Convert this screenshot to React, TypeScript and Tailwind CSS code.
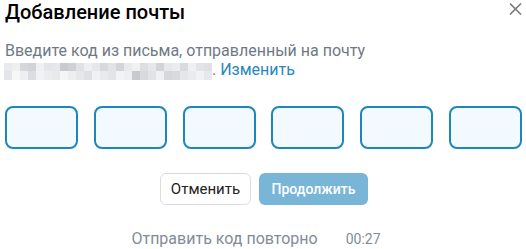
import React from "react";

const shadesTop = [
  "#e9eaec","#eeeff1","#d6d7db","#d2d3d7","#f0f0f2","#e4e5e8","#e6e7ea","#c9cacf","#cfd0d4","#e0e1e4",
  "#eeeff0","#e6e7ea","#d8d9dd","#e2e3e6","#d4d5d9","#e9eaec","#f1f1f3","#dddee1","#e6e7e9","#d3d4d8",
  "#e7e8ea","#ececee","#d9dadd","#f0f0f2","#e3e4e7","#dfe0e3",
];
const shadesBot = [
  "#e4e5e8","#f7f7f8","#eeeff1","#dcdde0","#f2f2f4","#ebecee","#e8e9eb","#f5f5f6","#edeef0","#e6e7e9",
  "#dfe0e3","#f1f1f3","#e9eaec","#e4e5e8","#f3f3f5","#eeeff0","#c8c9ce","#d8d9dc","#e2e3e5","#f0f0f2",
  "#d6d7da","#d9dadd","#e5e6e8","#eaebed","#f1f2f3","#e7e8ea",
];

export default function App() {
  return (
    <div
      className="w-[526px] h-[249px] bg-white relative overflow-hidden"
      style={{ fontFamily: "Roboto, 'Liberation Sans', sans-serif" }}
    >
      <button className="absolute left-[507px] top-[1px] w-[16px] h-[16px] flex items-center justify-center">
        <svg width="13" height="12" viewBox="0 0 13 12" fill="none">
          <path d="M1 0.5 L12 11.5 M12 0.5 L1 11.5" stroke="#7d7d7d" strokeWidth="1.6" />
        </svg>
      </button>

      <div className="pl-[5px] pr-[4px]">
        <h1 className="text-[20px] leading-[24px] font-medium text-black">
          Добавление почты
        </h1>

        <div className="mt-[17px] text-[16px] leading-[19px] text-[#6f7985]">
          <div>Введите код из письма, отправленный на почту</div>
          <div className="whitespace-nowrap">
            <span className="inline-block w-[208px] h-[17px] align-[-5px] ml-[-1px]">
              <span className="flex h-[8px]">
                {shadesTop.map((c, i) => (
                  <span key={i} className="w-[8px] h-full" style={{ backgroundColor: c }} />
                ))}
              </span>
              <span className="flex h-[9px]">
                {shadesBot.map((c, i) => (
                  <span key={i} className="w-[8px] h-full" style={{ backgroundColor: c }} />
                ))}
              </span>
            </span>
            <span>. </span>
            <span className="text-[#2787bf]">Изменить</span>
          </div>
        </div>

        <div className="mt-[26px] flex justify-between">
          {[0, 1, 2, 3, 4, 5].map((i) => (
            <div
              key={i}
              className="w-[73px] h-[43px] rounded-[8px] border-2 border-[#1d86ba] bg-[#f2faff]"
            />
          ))}
        </div>

        <div className="mt-[24px] flex justify-center gap-[8px] pl-[1px]">
          <button className="w-[91px] h-[32px] rounded-[6px] border border-[#dcdcdc] bg-white text-[15px] text-[#222222]">
            Отменить
          </button>
          <button className="w-[109px] h-[32px] rounded-[6px] bg-[#78b5d6] text-[14px] font-medium text-white">
            Продолжить
          </button>
        </div>

        <div className="mt-[24px] flex justify-center items-baseline pr-[15px]">
          <span className="text-[16px] leading-[19px] text-[#818c99]">Отправить код повторно</span>
          <span className="ml-[28px] text-[14px] leading-[19px] text-[#818c99]">00:27</span>
        </div>
      </div>
    </div>
  );
}
